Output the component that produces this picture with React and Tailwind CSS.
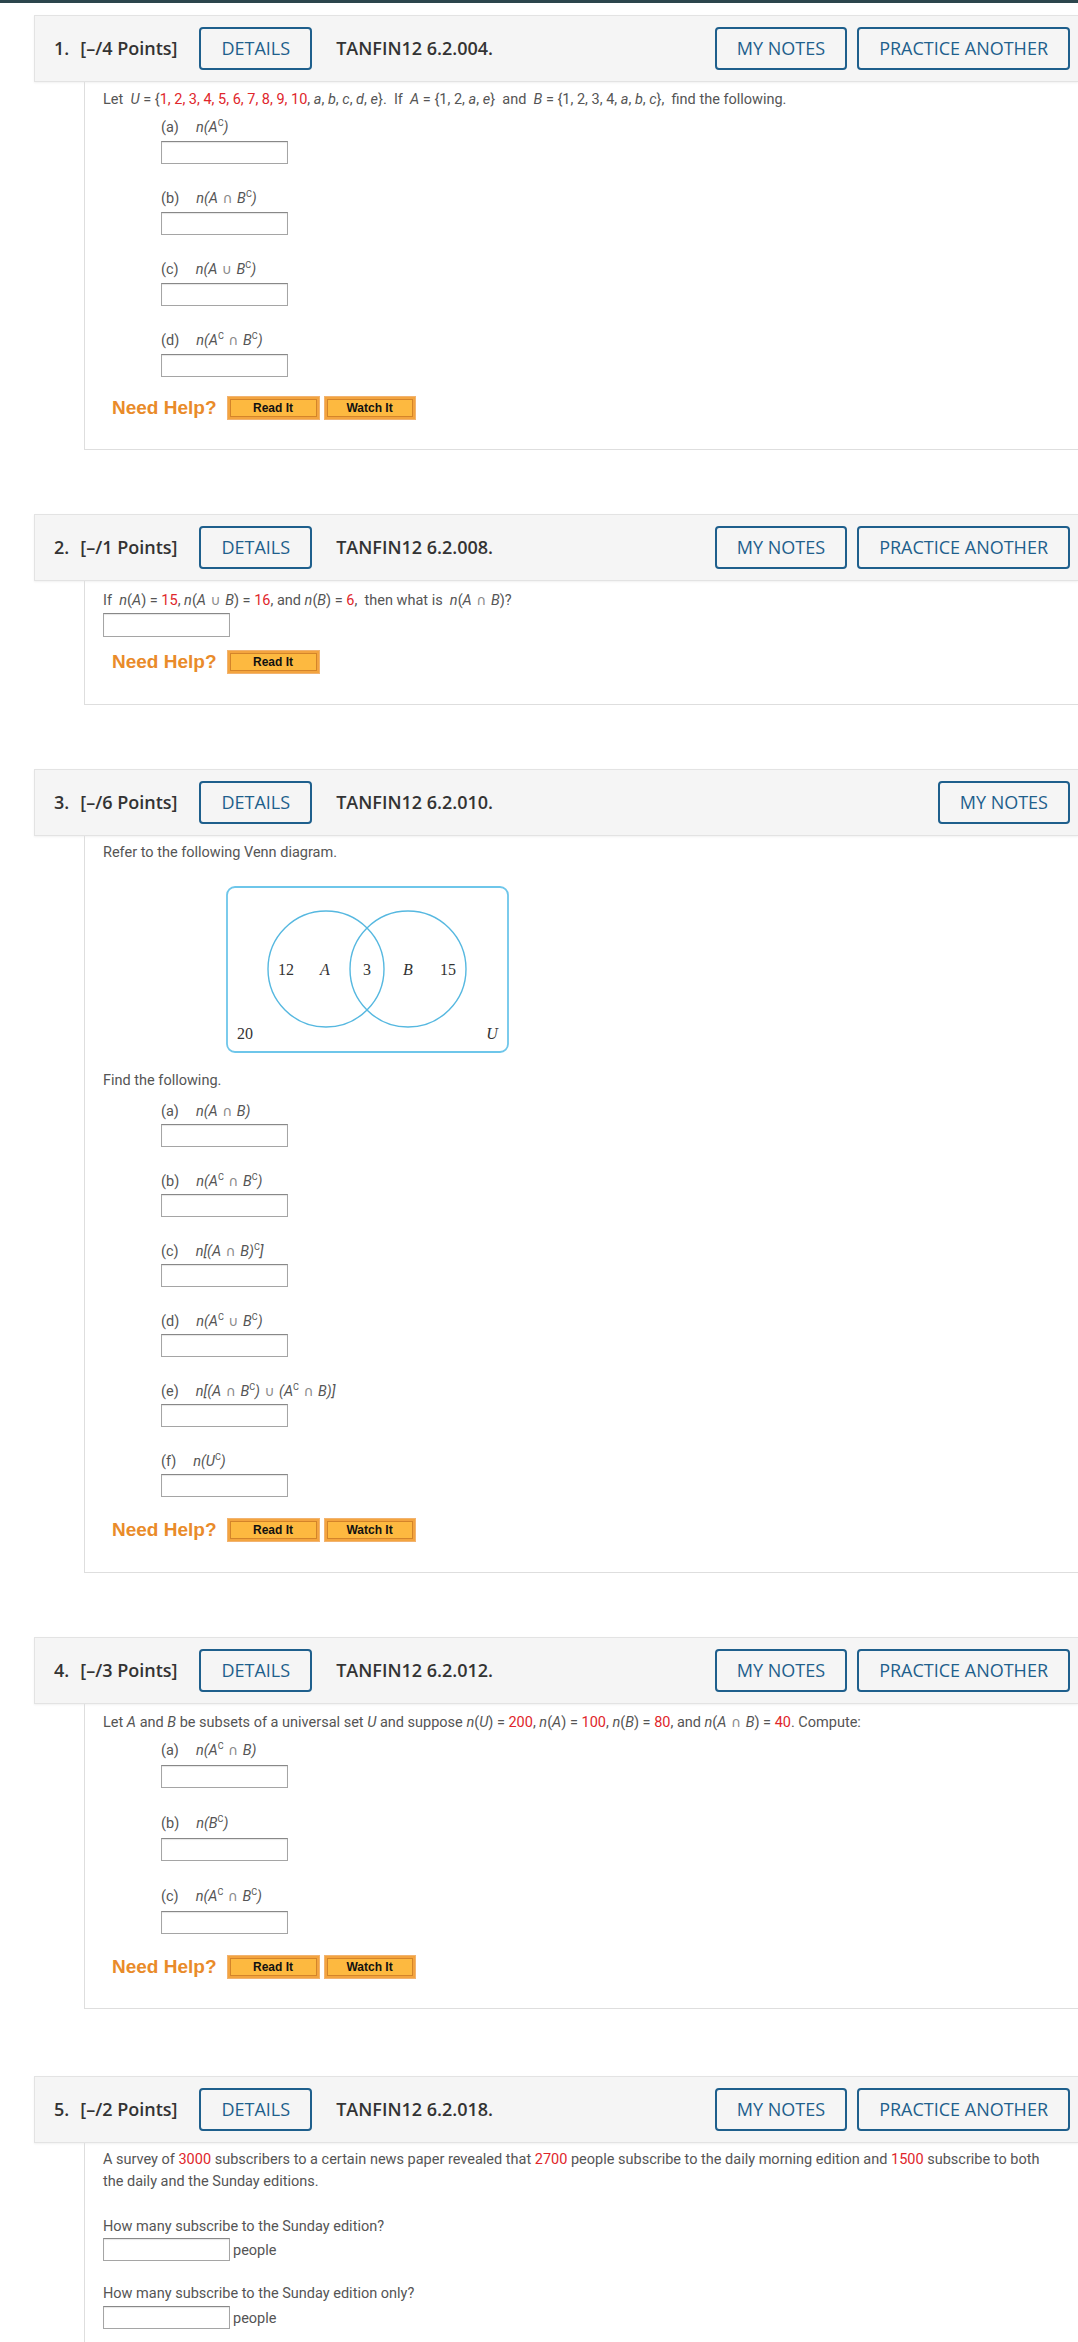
import React from "react";

const Red = ({ children }) => <span className="text-[#e0262b]">{children}</span>;
const C = () => <span className="align-super text-[9px] leading-none not-italic">C</span>;
const Op = ({ children }) => (
  <span className="not-italic text-[#8a8a8a] font-['DejaVu_Sans',sans-serif] text-[14px] leading-none"> {children} </span>
);
const M = ({ children }) => <i className="italic">{children}</i>;

function Btn({ children, className = "" }) {
  return (
    <div className={`h-[43px] px-[20px] border-2 border-[#1e5f8c] rounded-[4px] text-[#1e5f8c] flex items-center ${className}`}>
      {children}
    </div>
  );
}

function Header({ num, pts, code, practice = true }) {
  return (
    <div className="ml-[34px] h-[67px] flex items-center bg-[#f5f5f5] border-l border-y border-[#e3e3e3] shadow-[0_1px_2px_rgba(0,0,0,0.06)] pl-[19px] pr-[8px] font-['Open_Sans',sans-serif] text-[18px] whitespace-nowrap">
      <span className="font-semibold text-[#333]">{num}.</span>
      <span className="ml-[11px] font-semibold text-[#333]">[–/{pts} Points]</span>
      <Btn className="ml-[22px]">DETAILS</Btn>
      <span className="ml-[24px] font-semibold text-[#333]">TANFIN12 {code}.</span>
      <div className="ml-auto flex gap-[10px]">
        <Btn>MY NOTES</Btn>
        {practice && <Btn>PRACTICE ANOTHER</Btn>}
      </div>
    </div>
  );
}

function Input({ h = "h-[23px]" }) {
  return (
    <div className={`w-[127px] ${h} bg-white border border-[#a5a5a5] border-t-[#888] shadow-[inset_0_1px_1px_rgba(0,0,0,0.1)]`} />
  );
}

function HelpBtn({ children, w }) {
  return (
    <div className={`${w} h-[24px] border border-[#f2b36f] bg-[#f3a43f] p-[2px] flex`}>
      <div className="flex-1 border border-[#d4842a] bg-[#fdb940] flex items-center justify-center font-['Liberation_Sans',Arial,sans-serif] font-bold text-[12px] text-[#111] leading-[14px]">
        {children}
      </div>
    </div>
  );
}

function NeedHelp({ watch = true, className = "" }) {
  return (
    <div className={`ml-[9px] flex items-center h-[24px] ${className}`}>
      <span className="font-['Liberation_Sans',Arial,sans-serif] font-bold text-[19px] leading-[24px] text-[#e98b2a] whitespace-nowrap">Need Help?</span>
      <div className="ml-[10px] flex gap-[4px]">
        <HelpBtn w="w-[93px]">Read It</HelpBtn>
        {watch && <HelpBtn w="w-[92px]">Watch It</HelpBtn>}
      </div>
    </div>
  );
}

function Items({ list, labelMt, inputMt, gap }) {
  return (
    <div>
      {list.map((it, i) => (
        <div key={i} className="pl-[58px]" style={{ marginTop: i === 0 ? labelMt : gap }}>
          <div className="h-[20px] flex items-center whitespace-nowrap">
            <span>({it[0]})</span>
            <span className="ml-[17px] italic">{it[1]}</span>
          </div>
          <div style={{ marginTop: inputMt }}>
            <Input />
          </div>
        </div>
      ))}
    </div>
  );
}

const Box = ({ children, className = "" }) => (
  <div className={`ml-[84px] border-l border-b border-[#dedede] pl-[18px] font-['Roboto',sans-serif] text-[14.5px] text-[#555] leading-[20px] ${className}`}>
    {children}
  </div>
);

function Venn() {
  return (
    <svg width="283" height="167" viewBox="0 0 283 167" className="block ml-[123px] mt-[23px]">
      <rect x="1" y="1" width="281" height="165" rx="8" fill="none" stroke="#6ec6ea" strokeWidth="1.8" />
      <circle cx="100" cy="83" r="58" fill="none" stroke="#56b8e0" strokeWidth="1.4" />
      <circle cx="182" cy="83" r="58" fill="none" stroke="#56b8e0" strokeWidth="1.4" />
      <g fontFamily="'Liberation Serif', serif" fontSize="16" fill="#333" textAnchor="middle">
        <text x="60" y="89">12</text>
        <text x="99" y="89" fontStyle="italic">A</text>
        <text x="141" y="89">3</text>
        <text x="182" y="89" fontStyle="italic">B</text>
        <text x="222" y="89">15</text>
        <text x="19" y="153">20</text>
        <text x="266" y="153" fontStyle="italic">U</text>
      </g>
    </svg>
  );
}

export default function App() {
  return (
    <div className="w-[1078px] h-[2342px] overflow-hidden bg-white">
      <div className="h-[3px] bg-[#2c464d]" />

      {/* Question 1 */}
      <div className="mt-[12px]">
        <Header num="1" pts="4" code="6.2.004" />
        <Box className="pt-[8px] pb-[29px]">
          <p className="whitespace-nowrap">
            Let&nbsp; <M>U</M> = {"{"}
            <Red>1, 2, 3, 4, 5, 6, 7, 8, 9, 10</Red>, <M>a</M>, <M>b</M>, <M>c</M>, <M>d</M>, <M>e</M>{"}"}.&nbsp; If&nbsp; <M>A</M> = {"{"}1, 2, <M>a</M>, <M>e</M>{"}"}&nbsp; and&nbsp; <M>B</M> = {"{"}1, 2, 3, 4, <M>a</M>, <M>b</M>, <M>c</M>{"}"},&nbsp; find the following.
          </p>
          <Items
            labelMt={8}
            inputMt={3}
            gap={25}
            list={[
              ["a", <>n(A<C />)</>],
              ["b", <>n(A<Op>∩</Op>B<C />)</>],
              ["c", <>n(A<Op>∪</Op>B<C />)</>],
              ["d", <>n(A<C /><Op>∩</Op>B<C />)</>],
            ]}
          />
          <NeedHelp className="mt-[19px]" />
        </Box>
      </div>

      {/* Question 2 */}
      <div className="mt-[64px]">
        <Header num="2" pts="1" code="6.2.008" />
        <Box className="pt-[10px] pb-[30px]">
          <p className="whitespace-nowrap">
            If&nbsp; <M>n</M>(<M>A</M>) = <Red>15</Red>, <M>n</M>(<M>A</M><Op>∪</Op><M>B</M>) = <Red>16</Red>, and <M>n</M>(<M>B</M>) = <Red>6</Red>,&nbsp; then what is&nbsp; <M>n</M>(<M>A</M><Op>∩</Op><M>B</M>)?
          </p>
          <div className="mt-[2px]">
            <Input h="h-[24px]" />
          </div>
          <NeedHelp watch={false} className="mt-[13px]" />
        </Box>
      </div>

      {/* Question 3 */}
      <div className="mt-[64px]">
        <Header num="3" pts="6" code="6.2.010" practice={false} />
        <Box className="pt-[7px] pb-[30px]">
          <p>Refer to the following Venn diagram.</p>
          <Venn />
          <p className="mt-[18px]">Find the following.</p>
          <Items
            labelMt={11}
            inputMt={2}
            gap={25}
            list={[
              ["a", <>n(A<Op>∩</Op>B)</>],
              ["b", <>n(A<C /><Op>∩</Op>B<C />)</>],
              ["c", <>n[(A<Op>∩</Op>B)<C />]</>],
              ["d", <>n(A<C /><Op>∪</Op>B<C />)</>],
              ["e", <>n[(A<Op>∩</Op>B<C />)<Op>∪</Op>(A<C /><Op>∩</Op>B)]</>],
              ["f", <>n(U<C />)</>],
            ]}
          />
          <NeedHelp className="mt-[21px]" />
        </Box>
      </div>

      {/* Question 4 */}
      <div className="mt-[64px]">
        <Header num="4" pts="3" code="6.2.012" />
        <Box className="pt-[9px] pb-[29px]">
          <p className="whitespace-nowrap">
            Let <M>A</M> and <M>B</M> be subsets of a universal set <M>U</M> and suppose <M>n</M>(<M>U</M>) = <Red>200</Red>, <M>n</M>(<M>A</M>) = <Red>100</Red>, <M>n</M>(<M>B</M>) = <Red>80</Red>, and <M>n</M>(<M>A</M><Op>∩</Op><M>B</M>) = <Red>40</Red>. Compute:
          </p>
          <Items
            labelMt={8}
            inputMt={4}
            gap={26}
            list={[
              ["a", <>n(A<C /><Op>∩</Op>B)</>],
              ["b", <>n(B<C />)</>],
              ["c", <>n(A<C /><Op>∩</Op>B<C />)</>],
            ]}
          />
          <NeedHelp className="mt-[21px]" />
        </Box>
      </div>

      {/* Question 5 */}
      <div className="mt-[67px]">
        <Header num="5" pts="2" code="6.2.018" />
        <Box className="pt-[6px] pb-[30px]">
          <p className="leading-[22px] whitespace-nowrap">
            A survey of <Red>3000</Red> subscribers to a certain news paper revealed that <Red>2700</Red> people subscribe to the daily morning edition and <Red>1500</Red> subscribe to both
            <br />
            the daily and the Sunday editions.
          </p>
          <p className="mt-[24px]">How many subscribe to the Sunday edition?</p>
          <div className="mt-[1px] flex items-end">
            <Input />
            <span className="ml-[3px] leading-[20px]">people</span>
          </div>
          <p className="mt-[23px]">How many subscribe to the Sunday edition only?</p>
          <div className="mt-[2px] flex items-end">
            <Input />
            <span className="ml-[3px] leading-[20px]">people</span>
          </div>
          <NeedHelp className="mt-[15px]" />
        </Box>
      </div>
    </div>
  );
}
